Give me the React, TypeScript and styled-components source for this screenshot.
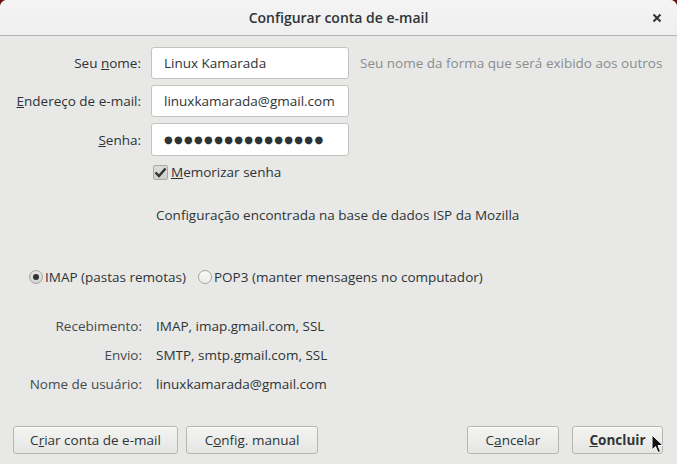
import React from 'react';
import styled, { createGlobalStyle } from 'styled-components';

const GlobalStyle = createGlobalStyle`
  html, body {
    margin: 0;
    padding: 0;
    background: #6a0f12;
  }
  body {
    font-family: 'Open Sans', 'DejaVu Sans', sans-serif;
    font-size: 13.5px;
    color: #2e3436;
  }
`;

const Window = styled.div`
  position: relative;
  width: 677px;
  height: 464px;
  display: flex;
  flex-direction: column;
  background: #e8e8e7;
  border-radius: 7px 7px 0 0;
  overflow: hidden;
`;

const TitleBar = styled.div`
  flex: none;
  box-sizing: border-box;
  height: 36px;
  display: grid;
  grid-template-columns: 1fr auto 1fr;
  align-items: center;
  background: linear-gradient(#f4f4f4, #efefef);
  border-bottom: 1px solid #b4b4b1;
`;

const Title = styled.div`
  grid-column: 2;
  font-weight: 600;
  font-size: 14px;
  color: #2e3436;
`;

const CloseBtn = styled.div`
  justify-self: end;
  margin-right: 13px;
  width: 14px;
  height: 14px;
  display: flex;
  align-items: center;
  justify-content: center;
`;

const Content = styled.div`
  flex: 1;
  display: flex;
  flex-direction: column;
  padding-top: 11px;
`;

const FormGrid = styled.div`
  display: grid;
  grid-template-columns: 141px 198px auto;
  grid-template-rows: 32px 32px 33px 20px;
  column-gap: 10px;
  row-gap: 6px;
  align-items: center;
`;

const Label = styled.label`
  text-align: right;
  white-space: nowrap;
`;

const Field = styled.input`
  box-sizing: border-box;
  width: 198px;
  height: 100%;
  padding: 0 12px;
  border: 1px solid #c3c3c0;
  border-radius: 3px;
  background: #fff;
  font-family: inherit;
  font-size: 13.5px;
  color: #2e3436;
  outline: none;
`;

const Dots = styled(Field)`
  font-family: 'DejaVu Sans', sans-serif;
  font-size: 10px;
  letter-spacing: 1.3px;
  padding-left: 12px;
`;

const Hint = styled.span`
  margin-left: 1px;
  color: #8a8d8e;
  white-space: nowrap;
`;

const CheckRow = styled.div`
  grid-column: 2;
  height: 20px;
  display: flex;
  align-items: center;
  padding-left: 2px;
`;

const CheckBox = styled.span`
  box-sizing: border-box;
  width: 15px;
  height: 15px;
  margin-right: 3px;
  border: 1px solid #a9a9a6;
  border-radius: 2px;
  background: linear-gradient(#dcdcda, #cfcfcc);
  display: flex;
  align-items: center;
  justify-content: center;
`;

const Notice = styled.div`
  margin-top: 23px;
  padding-left: 156px;
  line-height: 20px;
`;

const RadioRow = styled.div`
  margin-top: 42px;
  padding-left: 29px;
  display: flex;
  align-items: center;
  line-height: 20px;
`;

const RadioItem = styled.span`
  display: flex;
  align-items: center;
  margin-right: 12px;
`;

const RadioDot = styled.span<{ $on?: boolean }>`
  box-sizing: border-box;
  width: 14px;
  height: 14px;
  margin-right: 2px;
  border-radius: 50%;
  border: 1px solid #a4a4a1;
  background: ${({ $on }) => ($on ? 'linear-gradient(#e4e4e2, #d4d4d1)' : 'linear-gradient(#fafafa, #ececeb)')};
  display: flex;
  align-items: center;
  justify-content: center;
  &::after {
    content: '';
    display: ${({ $on }) => ($on ? 'block' : 'none')};
    width: 6px;
    height: 6px;
    border-radius: 50%;
    background: #2e3436;
  }
`;

const InfoGrid = styled.div`
  margin-top: 24px;
  display: grid;
  grid-template-columns: 142px auto;
  grid-auto-rows: 29px;
  column-gap: 14px;
  align-items: center;
`;

const InfoLabel = styled.span`
  text-align: right;
  color: #454a4b;
`;

const Footer = styled.div`
  margin-top: 28px;
  padding: 0 14px 0 13px;
  display: flex;
  align-items: center;
  gap: 8px;
`;

const Spacer = styled.div`
  flex: 1;
`;

const Button = styled.button<{ $w: number; $bold?: boolean }>`
  box-sizing: border-box;
  width: ${({ $w }) => $w}px;
  height: 28px;
  padding: 0;
  border: 1px solid #b6b6b3;
  border-radius: 3px;
  background: linear-gradient(#f4f4f3, #e5e5e3);
  box-shadow: inset 0 1px #fff;
  font-family: inherit;
  font-size: 13.5px;
  font-weight: ${({ $bold }) => ($bold ? 700 : 400)};
  color: #2e3436;
`;

const Cursor = styled.svg`
  position: absolute;
  left: 651px;
  top: 434px;
`;

export default function App() {
  return (
    <>
      <GlobalStyle />
      <Window>
        <TitleBar>
          <Title>Configurar conta de e-mail</Title>
          <CloseBtn>
            <svg width="10" height="10" viewBox="0 0 10 10">
              <path d="M1.5 1.5 L8.5 8.5 M8.5 1.5 L1.5 8.5" stroke="#2e3436" strokeWidth="2" />
            </svg>
          </CloseBtn>
        </TitleBar>
        <Content>
          <FormGrid>
            <Label>
              Seu <u>n</u>ome:
            </Label>
            <Field readOnly defaultValue="Linux Kamarada" />
            <Hint>Seu nome da forma que será exibido aos outros</Hint>
            <Label>
              <u>E</u>ndereço de e-mail:
            </Label>
            <Field readOnly defaultValue="linuxkamarada@gmail.com" />
            <span />
            <Label>
              <u>S</u>enha:
            </Label>
            <Dots readOnly defaultValue={'●'.repeat(16)} />
            <span />
            <CheckRow>
              <CheckBox>
                <svg width="13" height="11" viewBox="0 0 13 11">
                  <path d="M1.5 5.5 L5 9 L11.5 1.5" stroke="#2e3436" strokeWidth="2.4" fill="none" />
                </svg>
              </CheckBox>
              <span>
                <u>M</u>emorizar senha
              </span>
            </CheckRow>
          </FormGrid>
          <Notice>Configuração encontrada na base de dados ISP da Mozilla</Notice>
          <RadioRow>
            <RadioItem>
              <RadioDot $on />
              IMAP (pastas remotas)
            </RadioItem>
            <RadioItem>
              <RadioDot />
              POP3 (manter mensagens no computador)
            </RadioItem>
          </RadioRow>
          <InfoGrid>
            <InfoLabel>Recebimento:</InfoLabel>
            <span>IMAP, imap.gmail.com, SSL</span>
            <InfoLabel>Envio:</InfoLabel>
            <span>SMTP, smtp.gmail.com, SSL</span>
            <InfoLabel>Nome de usuário:</InfoLabel>
            <span>linuxkamarada@gmail.com</span>
          </InfoGrid>
          <Footer>
            <Button $w={165}>
              C<u>r</u>iar conta de e-mail
            </Button>
            <Button $w={132}>
              C<u>o</u>nfig. manual
            </Button>
            <Spacer />
            <Button $w={92}>
              C<u>a</u>ncelar
            </Button>
            <Button $w={91} $bold style={{ marginLeft: 5 }}>
              <u>C</u>oncluir
            </Button>
          </Footer>
        </Content>
        <Cursor width="13" height="20" viewBox="0 0 13 20">
          <path d="M1 1 L1 16 L4.5 12.5 L7 18.5 L9.5 17.5 L7 11.5 L12 11.5 Z" fill="#111" stroke="#fff" strokeWidth="1" />
        </Cursor>
      </Window>
    </>
  );
}
